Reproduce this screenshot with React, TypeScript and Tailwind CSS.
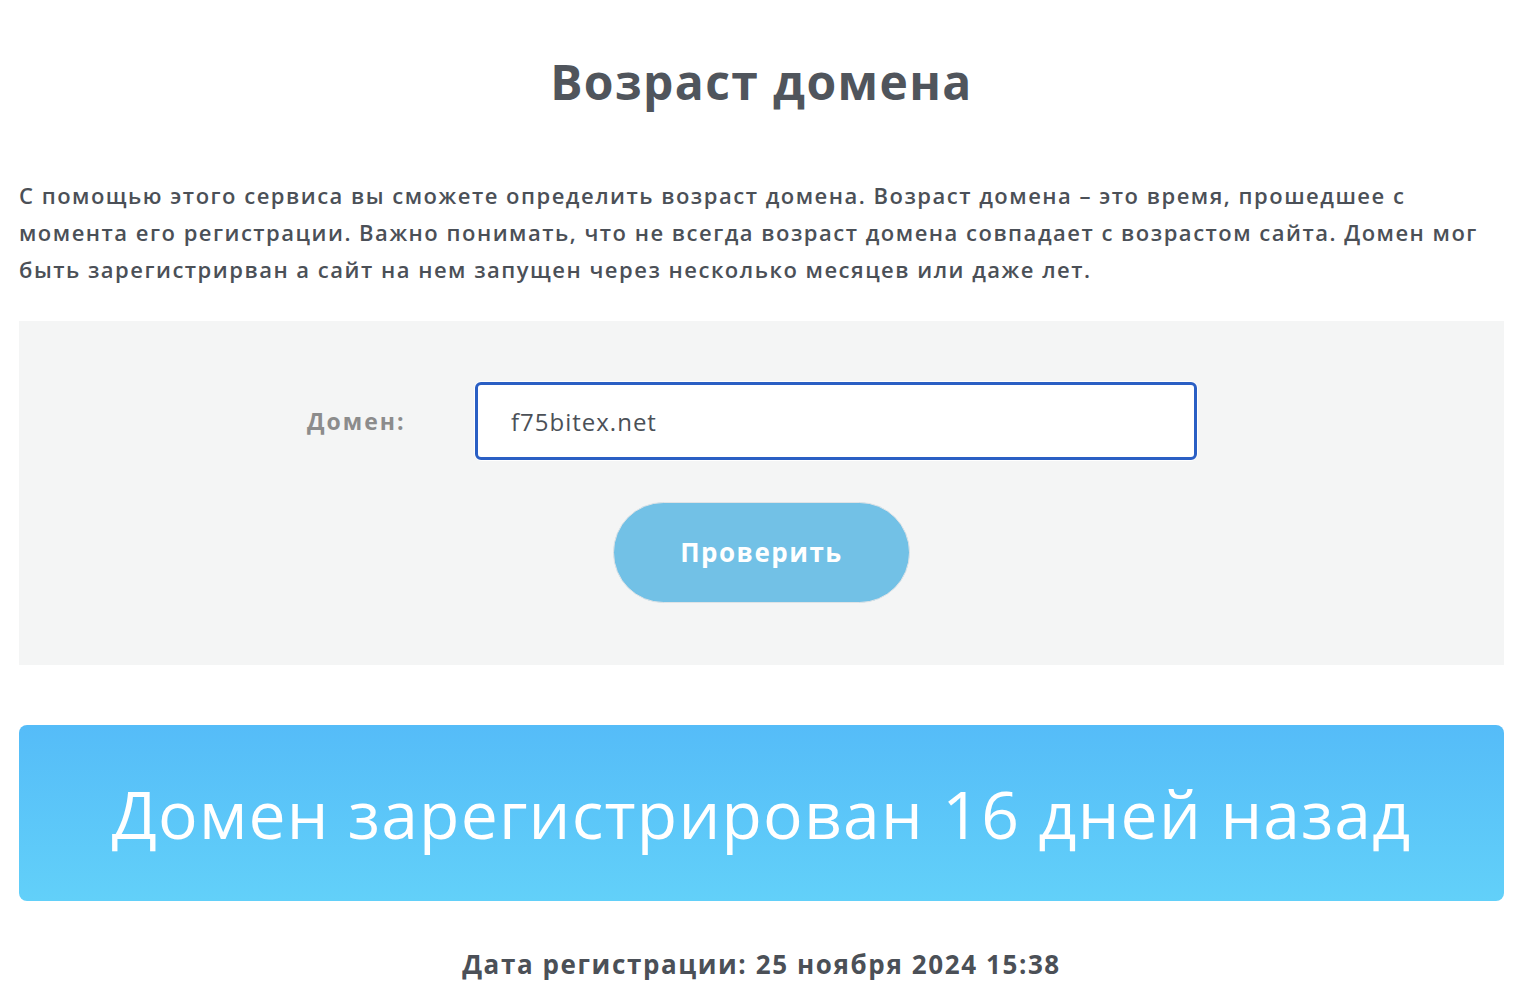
export default function App() {
  return (
    <div className="min-h-screen bg-white pl-[19px] pr-[22px] pt-[50px] text-[#4b5057] [font-family:'Open_Sans',sans-serif]">
      <h1 className="text-center text-[48px] font-bold leading-[64px] tracking-[1.4px] text-[#50555c]">
        Возраст домена
      </h1>

      <p className="mt-[63px] whitespace-nowrap text-[22px] font-semibold leading-[37px] tracking-[1.5px] text-[#4b5057]">
        С помощью этого сервиса вы сможете определить возраст домена. Возраст домена – это время, прошедшее с
        <br />
        момента его регистрации. Важно понимать, что не всегда возраст домена совпадает с возрастом сайта. Домен мог
        <br />
        быть зарегистрирван а сайт на нем запущен через несколько месяцев или даже лет.
      </p>

      <section className="mt-[33px] flex h-[344px] flex-col items-center bg-[#f4f5f5] pt-[60px]">
        <div className="flex w-full items-center">
          <label className="ml-[288px] w-[167px] text-[23px] font-bold tracking-[2px] text-[#8c8c8c]">
            Домен:
          </label>
          <div className="rounded-[8px] bg-white p-[1px]">
            <input
              defaultValue="f75bitex.net"
              className="h-[78px] w-[722px] rounded-[6px] border-[3px] border-[#2a5fc4] bg-white px-[33px] text-[24px] tracking-[1px] text-[#4b5057] outline-none"
            />
          </div>
        </div>
        <button className="mt-[41px] h-[101px] w-[297px] rounded-full border border-[#dfe3e6] bg-[#72c1e6] text-[26px] font-bold tracking-[1.5px] text-white">
          Проверить
        </button>
      </section>

      <div className="mt-[60px] flex h-[176px] items-center justify-center rounded-[8px] bg-gradient-to-b from-[#55bcf8] to-[#62d0f9]">
        <span className="text-[66px] font-normal tracking-[1.2px] text-white">
          Домен зарегистрирован 16 дней назад
        </span>
      </div>

      <p className="mt-[44px] text-center text-[26px] font-bold tracking-[1.6px] text-[#4b5057]">
        Дата регистрации: 25 ноября 2024 15:38
      </p>
    </div>
  );
}
